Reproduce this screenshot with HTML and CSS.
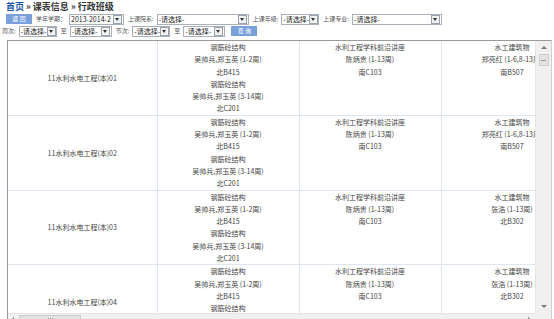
FILE: index.html
```html
<!DOCTYPE html>
<html lang="zh-CN">
<head>
    <meta charset="UTF-8">
    <title>行政班级</title>
    <link rel="stylesheet" href="styles.css">
</head>
<body>
    <div class="crumb"><a href="#">首页</a> » 课表信息 » 行政班级</div>

    <div class="bar bar-top">
        <button class="btn">返 回</button>
        <label>学年学期：</label>
        <span class="sel w-term"><span>2013-2014-2</span><i></i></span>
        <label>上课院系:</label>
        <span class="sel w-dept"><span>-请选择-</span><i></i></span>
        <label>上课年级:</label>
        <span class="sel w-grade"><span>-请选择-</span><i></i></span>
        <label>上课专业:</label>
        <span class="sel w-major"><span>-请选择-</span><i></i></span>
    </div>

    <div class="bar bar-sub">
        <label>周次:</label>
        <span class="sel w-s1"><span>-请选择-</span><i></i></span>
        <label>至</label>
        <span class="sel w-s2"><span>-请选择-</span><i></i></span>
        <label>节次:</label>
        <span class="sel w-s1"><span>-请选择-</span><i></i></span>
        <label>至</label>
        <span class="sel w-s2"><span>-请选择-</span><i></i></span>
        <button class="btn">查 询</button>
    </div>

    <div class="frame">
        <div class="view">
            <table class="kb">
                <colgroup>
                    <col class="c-cls"><col class="c-day"><col class="c-day"><col class="c-day">
                </colgroup>
                <tr>
                    <td class="cls">11水利水电工程(本)01</td>
                    <td>钢筋砼结构<br>吴帅兵,郑玉英 (1-2周)<br>北B415<br>钢筋砼结构<br>吴帅兵,郑玉英 (3-14周)<br>北C201</td>
                    <td>水利工程学科前沿讲座<br>陈炳贵 (1-13周)<br>南C103</td>
                    <td>水工建筑物<br>郑亮红 (1-6,8-13周)<br>南B507</td>
                </tr>
                <tr>
                    <td class="cls">11水利水电工程(本)02</td>
                    <td>钢筋砼结构<br>吴帅兵,郑玉英 (1-2周)<br>北B415<br>钢筋砼结构<br>吴帅兵,郑玉英 (3-14周)<br>北C201</td>
                    <td>水利工程学科前沿讲座<br>陈炳贵 (1-13周)<br>南C103</td>
                    <td>水工建筑物<br>郑亮红 (1-6,8-13周)<br>南B507</td>
                </tr>
                <tr>
                    <td class="cls">11水利水电工程(本)03</td>
                    <td>钢筋砼结构<br>吴帅兵,郑玉英 (1-2周)<br>北B415<br>钢筋砼结构<br>吴帅兵,郑玉英 (3-14周)<br>北C201</td>
                    <td>水利工程学科前沿讲座<br>陈炳贵 (1-13周)<br>南C103</td>
                    <td>水工建筑物<br>张浩 (1-13周)<br>北B302</td>
                </tr>
                <tr>
                    <td class="cls">11水利水电工程(本)04</td>
                    <td>钢筋砼结构<br>吴帅兵,郑玉英 (1-2周)<br>北B415<br>钢筋砼结构<br>吴帅兵,郑玉英 (3-14周)<br>北C201</td>
                    <td>水利工程学科前沿讲座<br>陈炳贵 (1-13周)<br>南C103</td>
                    <td>水工建筑物<br>张浩 (1-13周)<br>北B302</td>
                </tr>
            </table>
        </div>
        <div class="vbar">
            <span class="arr up"></span>
            <span class="thumb-v"></span>
            <span class="fill"></span>
            <span class="arr down"></span>
        </div>
        <div class="hbar">
            <span class="arr left"></span>
            <span class="thumb-h"></span>
            <span class="fill"></span>
            <span class="arr right"></span>
        </div>
        <div class="corner"></div>
    </div>
</body>
</html>
```

FILE: styles.css
```css
html, body {
    overflow: hidden;
}
body {
    margin: 0;
    padding: 0 2px;
    background: #fff;
    font-family: "Noto Sans CJK SC", "Liberation Sans", sans-serif;
    color: #333;
}
.crumb {
    height: 13px;
    padding-left: 4px;
    font-size: 9px;
    line-height: 13px;
    font-weight: bold;
    color: #333;
}
.crumb a {
    color: #1f5aa6;
    text-decoration: none;
}
.bar {
    display: flex;
    align-items: center;
    height: 12px;
}
.bar-top {
    padding-left: 4px;
}
.bar label {
    font-size: 6px;
    line-height: 10px;
    color: #555;
    margin: 0 3px 0 4px;
    white-space: nowrap;
}
.bar-sub label:first-child {
    margin-left: 0;
}
.btn {
    height: 10px;
    width: 26px;
    padding: 0;
    border: none;
    background: #7aa0dc;
    color: #fff;
    font-family: inherit;
    font-size: 6px;
    line-height: 10px;
    cursor: pointer;
}
.bar-sub .btn {
    margin-left: 6px;
}
.sel {
    display: flex;
    align-items: center;
    justify-content: space-between;
    height: 11px;
    box-sizing: border-box;
    border: 1px solid #a9b0b9;
    background: #fff;
    font-size: 7px;
    line-height: 9px;
    color: #222;
    padding-left: 1px;
    white-space: nowrap;
    overflow: hidden;
}
.sel i {
    flex: none;
    position: relative;
    width: 7px;
    height: 7px;
    margin-right: 1px;
    border: 1px solid #9aa3ad;
    background: #f2f2f2;
}
.sel i::after {
    content: "";
    position: absolute;
    left: 1px;
    top: 2px;
    border-left: 2.5px solid transparent;
    border-right: 2.5px solid transparent;
    border-top: 3px solid #333;
}
.w-term { width: 55px; }
.w-dept { width: 92px; }
.w-grade { width: 38px; }
.w-major { width: 90px; }
.w-s1 { width: 38px; }
.w-s2 { width: 42px; }

.frame {
    display: grid;
    grid-template-columns: 1fr 16px;
    grid-template-rows: 272px 15px;
    width: 545px;
    margin: 3px 0 0 5px;
    border: 1px solid #9a9a9a;
    border-right-color: #d0d0d0;
    box-sizing: border-box;
}
.view {
    overflow: hidden;
}
.kb {
    border-collapse: collapse;
    table-layout: fixed;
    width: 573px;
    font-size: 7px;
    line-height: 12.3px;
    color: #444;
}
.c-cls { width: 149px; }
.c-day { width: 142px; }
.kb td {
    border: 1px solid #dde6f1;
    border-top: none;
    padding: 0;
    text-align: center;
    vertical-align: top;
    height: 73px;
    white-space: nowrap;
    overflow: hidden;
}
.kb td:first-child {
    border-left: none;
}
.kb td.cls {
    vertical-align: middle;
}
.vbar, .hbar {
    display: flex;
    background: #f0f0f0;
}
.vbar {
    flex-direction: column;
    align-items: center;
    border-left: 1px solid #e6e6e6;
}
.hbar {
    align-items: center;
    border-top: 1px solid #e6e6e6;
}
.arr {
    flex: none;
    width: 0;
    height: 0;
    margin: 5px;
}
.arr.up {
    border-left: 3px solid transparent;
    border-right: 3px solid transparent;
    border-bottom: 3px solid #777;
}
.arr.down {
    border-left: 3px solid transparent;
    border-right: 3px solid transparent;
    border-top: 3px solid #777;
}
.arr.left {
    border-top: 3px solid transparent;
    border-bottom: 3px solid transparent;
    border-right: 3px solid #777;
    margin: 0 5px 2px 3px;
}
.arr.right {
    border-top: 3px solid transparent;
    border-bottom: 3px solid transparent;
    border-left: 3px solid #777;
    margin: 0 4px 2px 5px;
}
.fill {
    flex: 1;
}
.thumb-v {
    flex: none;
    width: 10px;
    height: 12px;
    background: #e2e2e2 repeating-linear-gradient(#e2e2e2 0 3px, #9c9c9c 3px 4px) center / 5px 7px no-repeat;
    border: 1px solid #cfcfcf;
    box-sizing: border-box;
}
.thumb-h {
    flex: none;
    width: 62px;
    height: 10px;
    margin-bottom: 2px;
    background: #e2e2e2 repeating-linear-gradient(90deg, #e2e2e2 0 1px, #9c9c9c 1px 2px) center / 6px 4px no-repeat;
    border: 1px solid #cfcfcf;
    box-sizing: border-box;
}
.corner {
    background: #f0f0f0;
}
```
